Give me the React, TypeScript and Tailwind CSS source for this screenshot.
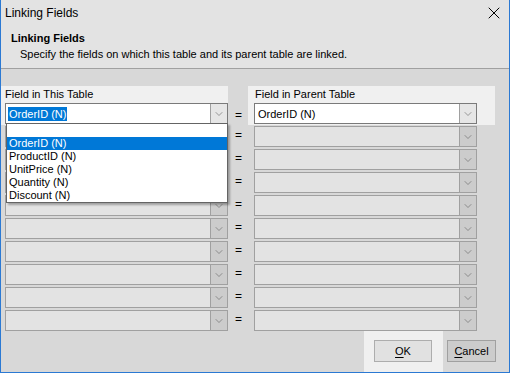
import { ChevronDown, X } from "lucide-react";

const FIELDS = ["OrderID (N)", "ProductID (N)", "UnitPrice (N)", "Quantity (N)", "Discount (N)"];

function Combo({ value, active, selected }: { value?: string; active?: boolean; selected?: boolean }) {
  return (
    <div
      className={`flex h-[21px] w-[223px] border ${
        active ? "border-[#7a7a7a] bg-white" : "border-[#a0a0a0] bg-[#e3e3e3]"
      }`}
    >
      <div className="flex flex-1 items-center pl-[2px]">
        {value && (
          <span className={`px-px leading-[14px] ${selected ? "bg-[#0078d7] text-white" : "text-black"}`}>{value}</span>
        )}
      </div>
      <div
        className={`flex w-[17px] items-center justify-center border-l ${
          active ? "border-[#a0a0a0] bg-[#e6e6e6]" : "border-[#a0a0a0] bg-[#cccccc]"
        }`}
      >
        <ChevronDown size={12} strokeWidth={1.2} className="text-[#606060]" />
      </div>
    </div>
  );
}

function Eq() {
  return <div className="-mt-[3px] flex h-[21px] w-[26px] items-center pl-[7px] text-[12px] leading-none">=</div>;
}

export default function App() {
  return (
    <div
      className="flex h-[373px] w-[510px] flex-col border-x border-b border-[#2b79d3] bg-[#d8d8d8] text-[11px] text-black"
      style={{ fontFamily: '"Liberation Sans", Arial, sans-serif' }}
    >
      {/* title bar */}
      <div className="flex h-[26px] items-center justify-between bg-[#e3e3e3] pl-[4px] pr-[5px]">
        <span className="text-[12px]">Linking Fields</span>
        <X size={20} strokeWidth={1.2} className="text-black" />
      </div>

      {/* header */}
      <div className="h-[43px] border-b border-[#a0a0a0] bg-[#e3e3e3] pl-[10px] pt-[4px] leading-[16px]">
        <div className="font-bold">Linking Fields</div>
        <div className="pl-[9px]">Specify the fields on which this table and its parent table are linked.</div>
      </div>

      {/* body */}
      <div className="flex flex-1 flex-col pt-[17px]">
        <div className="flex items-end">
          <div className="relative w-[227px] bg-[#f0f0f0] pb-px pl-[4px]">
            <div className="h-[17px] leading-[17px]">Field in This Table</div>
            <Combo value="OrderID (N)" active selected />
            {/* open dropdown */}
            <div className="absolute left-[5px] top-[37px] z-10 w-[222px] border border-[#646464] bg-white shadow-[2px_2px_2px_rgba(0,0,0,0.3)]">
              <div className="h-[13px]" />
              {FIELDS.map((f, i) => (
                <div
                  key={f}
                  className={`h-[13px] pl-[2px] leading-[13px] ${i === 0 ? "bg-[#0078d7] text-white" : ""}`}
                >
                  {f}
                </div>
              ))}
            </div>
          </div>
          <Eq />
          <div className="ml-[-6px] w-[247px] bg-[#f0f0f0] pb-px pl-[6px]">
            <div className="h-[17px] pl-px leading-[17px]">Field in Parent Table</div>
            <Combo value="OrderID (N)" active />
          </div>
        </div>

        <div className="mt-px flex flex-col gap-[2px]">
          {Array.from({ length: 9 }).map((_, i) => (
            <div key={i} className="flex items-center pl-[4px]">
              <Combo />
              <Eq />
              <Combo />
            </div>
          ))}
        </div>

        {/* buttons */}
        <div className="mt-auto flex justify-end pr-[13px]">
          <div className="h-[41px] w-[79px] bg-[#f0f0f0] pl-[10px] pt-[9px]">
            <button className="h-[22px] w-[58px] border border-[#adadad] bg-[#e1e1e1]">
              <span className="underline underline-offset-2">O</span>K
            </button>
          </div>
          <div className="ml-[4px] pt-[9px]">
            <button className="h-[22px] w-[49px] border border-[#a0a0a0] bg-[#cccccc]">
              <span className="underline underline-offset-2">C</span>ancel
            </button>
          </div>
        </div>
      </div>
    </div>
  );
}
